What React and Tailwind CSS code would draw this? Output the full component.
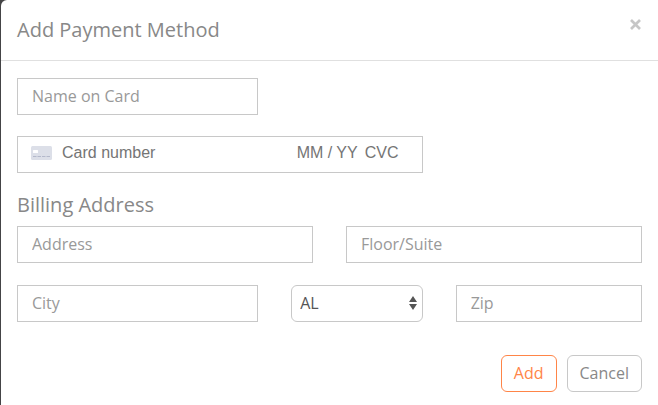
const fieldClass =
  'block h-[37px] w-full rounded-none border border-[#c8c8c8] bg-white px-[14px] pb-0.5 text-base text-[#555] outline-none placeholder:text-[#999] placeholder:opacity-100';

const cardInputClass =
  "h-6 min-w-0 bg-transparent font-['Liberation_Sans',sans-serif] text-base text-[#555] outline-none placeholder:text-[#757575] placeholder:opacity-100";

function Field({ label, className }) {
  return (
    <div className={className}>
      <input type="text" aria-label={label} placeholder={label} className={fieldClass} />
    </div>
  );
}

function CardIcon() {
  return (
    <svg width="21" height="14" viewBox="0 0 21 14" aria-hidden="true" className="shrink-0">
      <rect width="21" height="14" rx="1.5" fill="#dcdfe8" />
      <rect x="2" y="4" width="5" height="3" rx="0.5" fill="#fff" />
      <path d="M2 10.5h3.5M6.5 10.5h3.5M11 10.5h3.5M15.5 10.5h3.5" stroke="#b4b9cb" strokeWidth="1" />
    </svg>
  );
}

export default function App() {
  return (
    <div className="min-h-screen bg-[#444446] pl-px font-['Open_Sans',sans-serif] text-[#888]">
      <main className="min-h-screen rounded-tl-md bg-white">
        <header className="flex h-[61px] items-center justify-between border-b border-[#e0e0e0] px-4">
          <h1 className="text-xl">Add Payment Method</h1>
          <button type="button" aria-label="Close" className="mb-3 flex h-6 w-3 items-center justify-center text-[#c6c6c6]">
            <svg width="12" height="12" viewBox="0 0 12 12" aria-hidden="true">
              <path d="M1 2l9 9M10 2l-9 9" stroke="currentColor" strokeWidth="2.700" />
            </svg>
          </button>
        </header>
        <form className="px-4 pt-[17px]" onSubmit={(event) => event.preventDefault()}>
          <div className="grid grid-cols-12 gap-x-[33px] gap-y-[21px]">
            <Field label="Name on Card" className="col-span-5" />
            <div className="col-span-8 flex h-[37px] items-center border border-[#c8c8c8] pr-[21px] pb-1 pl-[13px]">
              <CardIcon />
              <input aria-label="Card number" placeholder="Card number" className={`${cardInputClass} ml-[10px] flex-1`} />
              <input aria-label="Expiry date" placeholder="MM / YY" className={`${cardInputClass} w-[68px]`} />
              <input aria-label="CVC" placeholder="CVC" className={`${cardInputClass} w-9`} />
            </div>
          </div>
          <h2 className="mt-[18px] mb-[7px] text-xl">Billing Address</h2>
          <div className="grid grid-cols-12 gap-x-[33px] gap-y-[22px]">
            <Field label="Address" className="col-span-6" />
            <Field label="Floor/Suite" className="col-span-6" />
            <Field label="City" className="col-span-5" />
            <div className="relative col-span-3">
              <select
                aria-label="State"
                defaultValue="AL"
                className="block h-[37px] w-full appearance-none rounded-md border border-[#c8c8c8] bg-white pr-5 pb-0.5 pl-2 text-base text-[#555] outline-none"
              >
                <option>AL</option>
                <option>AK</option>
                <option>AZ</option>
              </select>
              <svg
                width="8"
                height="14"
                viewBox="0 0 8 14"
                aria-hidden="true"
                className="pointer-events-none absolute top-[11px] right-[6px]"
              >
                <path d="M4 0l4 6H0zM4 14L0 8h8z" fill="#555" />
              </svg>
            </div>
            <Field label="Zip" className="col-span-4" />
          </div>
          <div className="mt-[33px] flex justify-end gap-[10px] pb-[13px]">
            <button type="submit" className="h-[37px] rounded-md border border-[#ff8548] px-3 pb-0.5 text-base text-[#ff8548]">
              Add
            </button>
            <button type="button" className="h-[37px] rounded-md border border-[#c8c8c8] px-3 pb-0.5 text-base text-[#888]">
              Cancel
            </button>
          </div>
        </form>
      </main>
    </div>
  );
}
